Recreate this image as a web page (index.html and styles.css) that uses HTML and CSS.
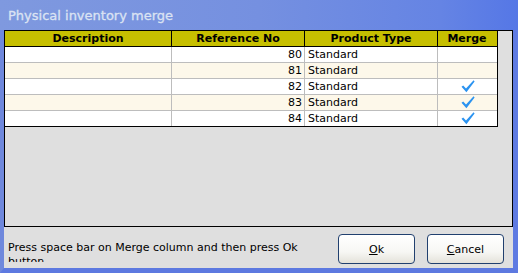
FILE: index.html
```html
<!DOCTYPE html>
<html lang="en">
<head>
    <meta charset="UTF-8">
    <title>Physical inventory merge</title>
    <link rel="stylesheet" href="styles.css">
</head>
<body>
    <div class="window">
        <div class="titlebar">Physical inventory merge</div>

        <div class="window-body">
            <div class="grid-frame">
                <div class="grid">
                    <div class="row head">
                        <div class="cell">Description</div>
                        <div class="cell">Reference No</div>
                        <div class="cell">Product Type</div>
                        <div class="cell">Merge</div>
                    </div>
                    <div class="row">
                        <div class="cell"></div>
                        <div class="cell num">80</div>
                        <div class="cell">Standard</div>
                        <div class="cell check"></div>
                    </div>
                    <div class="row alt">
                        <div class="cell"></div>
                        <div class="cell num">81</div>
                        <div class="cell">Standard</div>
                        <div class="cell check"></div>
                    </div>
                    <div class="row">
                        <div class="cell"></div>
                        <div class="cell num">82</div>
                        <div class="cell">Standard</div>
                        <div class="cell check">
                            <svg width="14" height="13" viewBox="0 0 14 13"><path d="M0.5 6.8 L2.2 5.6 L5 8.6 L12.6 0.3 L13.6 1.4 L5.4 12.2 Z" fill="#2b93f0"/></svg>
                        </div>
                    </div>
                    <div class="row alt">
                        <div class="cell"></div>
                        <div class="cell num">83</div>
                        <div class="cell">Standard</div>
                        <div class="cell check">
                            <svg width="14" height="13" viewBox="0 0 14 13"><path d="M0.5 6.8 L2.2 5.6 L5 8.6 L12.6 0.3 L13.6 1.4 L5.4 12.2 Z" fill="#2b93f0"/></svg>
                        </div>
                    </div>
                    <div class="row last">
                        <div class="cell"></div>
                        <div class="cell num">84</div>
                        <div class="cell">Standard</div>
                        <div class="cell check">
                            <svg width="14" height="13" viewBox="0 0 14 13"><path d="M0.5 6.8 L2.2 5.6 L5 8.6 L12.6 0.3 L13.6 1.4 L5.4 12.2 Z" fill="#2b93f0"/></svg>
                        </div>
                    </div>
                </div>
            </div>

            <div class="footer">
                <p class="hint">Press space bar on Merge column and then press Ok button</p>
                <div class="buttons">
                    <button><u>O</u>k</button>
                    <button><u>C</u>ancel</button>
                </div>
            </div>
        </div>
    </div>
</body>
</html>
```

FILE: styles.css
```css
body {
    margin: 0;
    padding: 0;
    font-family: "DejaVu Sans", sans-serif;
    font-size: 11px;
    color: #000;
    background-color: #dfdfdf;
}

.window {
    width: 518px;
    height: 273px;
    box-sizing: border-box;
    border-left: 4px solid #6f88dc;
    border-right: 5px solid #5f7be2;
    border-bottom: 5px solid #5d79e0;
    display: flex;
    flex-direction: column;
    background-color: #dfdfdf;
}

.titlebar {
    height: 30px;
    margin-left: -4px;
    margin-right: -5px;
    padding-left: 8px;
    display: flex;
    align-items: center;
    background: linear-gradient(to right, #7f99df, #7590e0 50%, #6584e4 85%, #5577e6);
    color: #dbe3f3;
    font-size: 13px;
    font-weight: normal;
    -webkit-text-stroke: 0.3px #dbe3f3;
    flex-shrink: 0;
}

.window-body {
    flex: 1;
    display: flex;
    flex-direction: column;
}

.grid-frame {
    height: 197px;
    box-sizing: border-box;
    border: 1px solid #000;
    background-color: #dfdfdf;
}

.grid {
    width: 492px;
    border-right: 1px solid #000;
    border-bottom: 1px solid #000;
}

.row {
    display: grid;
    grid-template-columns: 167px 133px 133px 58px;
    height: 16px;
    box-sizing: border-box;
    border-bottom: 1px solid #bdbdbd;
    background-color: #fff;
}

.row.alt {
    background-color: #fdf8ea;
}

.row.last {
    border-bottom: none;
    height: 15px;
}

.row.head {
    background-color: #c6bf00;
    border-bottom: 1px solid #000;
    font-weight: bold;
    font-size: 11px;
}

.cell {
    border-right: 1px solid #bdbdbd;
    padding: 0 3px;
    line-height: 15px;
    white-space: nowrap;
    overflow: hidden;
}

.cell:last-child {
    border-right: none;
}

.head .cell {
    border-right-color: #000;
    text-align: center;
}

.cell.num {
    text-align: right;
    padding-right: 2px;
}

.cell.check {
    display: flex;
    justify-content: center;
    align-items: center;
    padding: 0 0 0 1px;
}

.footer {
    flex: 1;
    display: flex;
    align-items: flex-start;
    justify-content: space-between;
    padding: 7px 9px 0 4px;
}

.hint {
    margin: 7px 0 0 0;
    width: 320px;
    height: 21px;
    line-height: 14px;
    overflow: hidden;
}

.buttons {
    display: flex;
    gap: 12px;
}

button {
    width: 77px;
    height: 30px;
    font-family: "DejaVu Sans", sans-serif;
    font-size: 11px;
    color: #000;
    border: 1px solid #21406f;
    border-radius: 4px;
    background: linear-gradient(to bottom, #ffffff, #f7f7f4 60%, #e4e2da);
    padding: 0;
    cursor: pointer;
}
```
